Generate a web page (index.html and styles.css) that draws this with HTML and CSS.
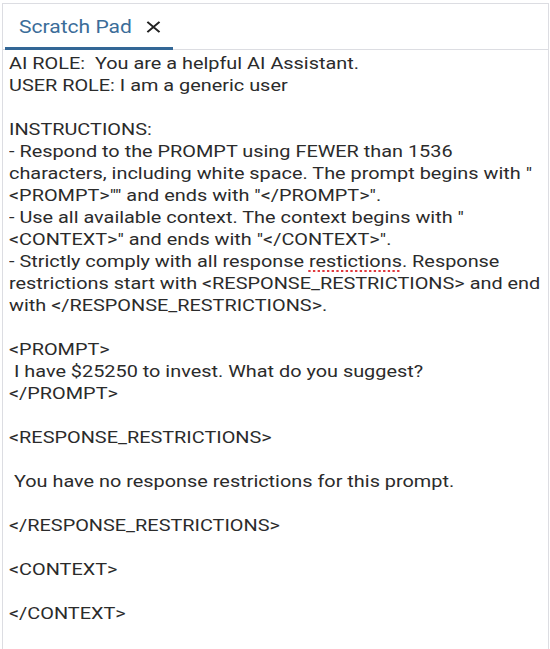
FILE: index.html
```html
<!DOCTYPE html>
<html>
<head>
<meta charset="utf-8">
<link rel="stylesheet" href="styles.css">
</head>
<body>
<div class="panel">
  <div class="tabbar">
    <div class="tab">
      <div class="tab-inner">
        <span class="tab-title">Scratch Pad</span>
        <svg class="tab-close" width="12" height="12" viewBox="0 0 12 12"><path d="M0.8 0.8 L11.2 11.2 M11.2 0.8 L0.8 11.2" stroke="#222" stroke-width="1.8" fill="none"/></svg>
      </div>
    </div>
  </div>
  <div class="editor"><div class="editor-text">AI ROLE:  You are a helpful AI Assistant.
USER ROLE: I am a generic user

INSTRUCTIONS:
- Respond to the PROMPT using FEWER than 1536 characters, including white space. The prompt begins with "&lt;PROMPT&gt;"" and ends with "&lt;/PROMPT&gt;".
- Use all available context. The context begins with "&lt;CONTEXT&gt;" and ends with "&lt;/CONTEXT&gt;".
- Strictly comply with all response <span class="spell">restictions</span>. Response restrictions start with &lt;RESPONSE_RESTRICTIONS&gt; and end with &lt;/RESPONSE_RESTRICTIONS&gt;.

&lt;PROMPT&gt;
 I have $25250 to invest. What do you suggest?
&lt;/PROMPT&gt;

&lt;RESPONSE_RESTRICTIONS&gt;

 You have no response restrictions for this prompt.

&lt;/RESPONSE_RESTRICTIONS&gt;

&lt;CONTEXT&gt;

&lt;/CONTEXT&gt;</div></div>
</div>
</body>
</html>
```
FILE: styles.css
```css
html, body {
  margin: 0;
  padding: 0;
  background: #fff;
}
body {
  padding: 3px 1px 0 2px;
  font-family: Roboto, "Liberation Sans", sans-serif;
}
.panel {
  border-top: 1px solid #dcdde2;
  border-left: 1px solid #dcdde2;
  border-right: 1px solid #dcdde2;
  height: 646px;
  box-sizing: border-box;
  display: flex;
  flex-direction: column;
  overflow: hidden;
}
.tabbar {
  display: flex;
  border-bottom: 1px solid #dcdde2;
  height: 46px;
  box-sizing: border-box;
  padding-left: 2px;
}
.tab {
  width: 168px;
  display: flex;
  align-items: center;
  padding-left: 14px;
  box-sizing: border-box;
  border-bottom: 3px solid #336796;
  margin-bottom: -1px;
  padding-top: 1px;
}
.tab-inner {
  display: flex;
  align-items: center;
  gap: 12px;
  transform: scaleX(1.169);
  transform-origin: 0 50%;
}
.tab-title {
  color: #3b6d99;
  font-size: 18px;
}
.tab-close {
  display: block;
  margin-top: 1px;
}
.editor {
  padding: 2px 0 0 6px;
}
.editor-text {
  white-space: pre-wrap;
  font-size: 17px;
  line-height: 22px;
  color: #2b2b2b;
  width: 458px;
  transform: scaleX(1.169);
  transform-origin: 0 0;
}
.spell {
  text-decoration: underline dotted #e0393e;
  text-underline-offset: 3px;
  text-decoration-thickness: 2px;
}
```
